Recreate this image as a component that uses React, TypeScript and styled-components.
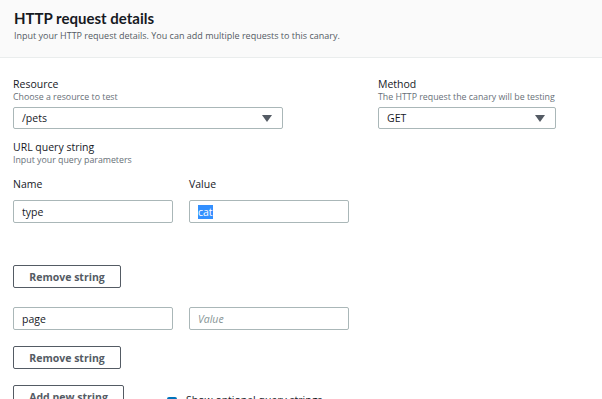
import React from "react";
import styled, { createGlobalStyle } from "styled-components";

const Global = createGlobalStyle`
  html, body { margin: 0; padding: 0; background: #ffffff; }
  body { font-family: "Open Sans", "Noto Sans", Arial, sans-serif; color: #16191f; overflow: hidden; }
`;

const Page = styled.div`
  width: 602px;
  height: 399px;
  overflow: hidden;
  background: #fff;
`;

const Header = styled.div`
  background: #fafafa;
  border-bottom: 1px solid #eaeded;
  padding: 8px 14px 0;
  height: 49px;
`;

const Title = styled.h2`
  margin: 0;
  font-family: Lato, "Open Sans", Arial, sans-serif;
  font-size: 15px;
  font-weight: 700;
  line-height: 20px;
  color: #16191f;
`;

const Subtitle = styled.div`
  font-size: 9px;
  line-height: 14px;
  color: #545b64;
  margin-top: 1px;
`;

const Body = styled.div`
  padding: 19px 13px 0;
  display: flex;
  flex-direction: column;
`;

const TopRow = styled.div`
  display: flex;
  gap: 95px;
`;

const Field = styled.div<{ $w: number }>`
  width: ${(p) => p.$w}px;
  display: flex;
  flex-direction: column;
`;

const Label = styled.div`
  font-size: 10.5px;
  line-height: 14px;
  color: #16191f;
`;

const Desc = styled.div`
  font-size: 8.8px;
  line-height: 12px;
  color: #687078;
`;

const Select = styled.div`
  margin-top: 4px;
  height: 20px;
  border: 1px solid #aab7b8;
  border-radius: 2px;
  display: flex;
  align-items: center;
  justify-content: space-between;
  padding: 0 10px 0 8px;
  font-size: 10.5px;
  color: #16191f;
`;

const Arrow = styled.span`
  width: 0;
  height: 0;
  border-left: 5px solid transparent;
  border-right: 5px solid transparent;
  border-top: 7px solid #545b64;
`;

const Section = styled.div`
  margin-top: 11px;
  display: flex;
  flex-direction: column;
`;

const PairRow = styled.div<{ $mt: number }>`
  display: flex;
  gap: 16px;
  margin-top: ${(p) => p.$mt}px;
`;

const ColLabel = styled.div`
  width: 160px;
  font-size: 10.5px;
  line-height: 14px;
  color: #16191f;
`;

const Input = styled.div<{ $placeholder?: boolean }>`
  box-sizing: border-box;
  width: 160px;
  height: 23px;
  border: 1px solid #aab7b8;
  border-radius: 2px;
  display: flex;
  align-items: center;
  padding: 0 8px;
  font-size: 10.5px;
  color: ${(p) => (p.$placeholder ? "#879596" : "#16191f")};
  font-style: ${(p) => (p.$placeholder ? "italic" : "normal")};
`;

const Selected = styled.span`
  background: #3390ff;
  color: #fff;
`;

const Button = styled.div<{ $mt: number; $w: number }>`
  margin-top: ${(p) => p.$mt}px;
  width: ${(p) => p.$w}px;
  height: 23px;
  box-sizing: border-box;
  border: 1px solid #545b64;
  border-radius: 2px;
  display: flex;
  align-items: center;
  justify-content: center;
  font-size: 10.5px;
  font-weight: 700;
  color: #545b64;
`;

const BottomRow = styled.div`
  display: flex;
  align-items: flex-start;
  gap: 43px;
`;

const CheckRow = styled.div`
  margin-top: 24px;
  display: flex;
  align-items: flex-start;
  gap: 9px;
  font-size: 10.5px;
  line-height: 14px;
  color: #16191f;
`;

const Box = styled.span`
  width: 10px;
  height: 10px;
  margin-top: 4px;
  background: #0073bb;
  border-radius: 2px;
  display: inline-block;
`;

export default function App() {
  return (
    <Page>
      <Global />
      <Header>
        <Title>HTTP request details</Title>
        <Subtitle>Input your HTTP request details. You can add multiple requests to this canary.</Subtitle>
      </Header>
      <Body>
        <TopRow>
          <Field $w={270}>
            <Label>Resource</Label>
            <Desc>Choose a resource to test</Desc>
            <Select>
              <span>/pets</span>
              <Arrow />
            </Select>
          </Field>
          <Field $w={178}>
            <Label>Method</Label>
            <Desc>The HTTP request the canary will be testing</Desc>
            <Select>
              <span>GET</span>
              <Arrow />
            </Select>
          </Field>
        </TopRow>
        <Section>
          <Label>URL query string</Label>
          <Desc>Input your query parameters</Desc>
          <PairRow $mt={11}>
            <ColLabel>Name</ColLabel>
            <ColLabel>Value</ColLabel>
          </PairRow>
          <PairRow $mt={9}>
            <Input>type</Input>
            <Input>
              <Selected>cat</Selected>
            </Input>
          </PairRow>
          <Button $mt={42} $w={108}>Remove string</Button>
          <PairRow $mt={19}>
            <Input>page</Input>
            <Input $placeholder>Value</Input>
          </PairRow>
          <Button $mt={16} $w={108}>Remove string</Button>
          <BottomRow>
            <Button $mt={16} $w={111}>Add new string</Button>
            <CheckRow>
              <Box />
              <span>Show optional query strings</span>
            </CheckRow>
          </BottomRow>
        </Section>
      </Body>
    </Page>
  );
}
